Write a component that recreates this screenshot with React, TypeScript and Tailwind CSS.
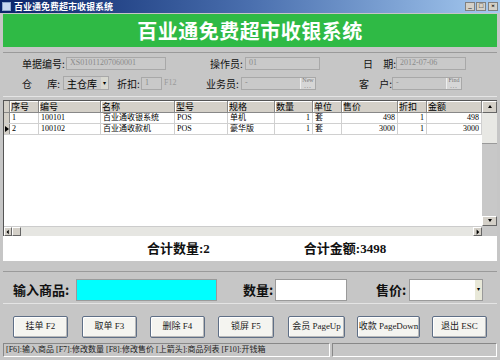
import React from 'react';

const FONT = '"Liberation Serif","Noto Sans CJK SC",serif';
const CJK = '"Noto Sans CJK SC","Liberation Sans",sans-serif';

type Row = { no: string; code: string; name: string; model: string; spec: string; qty: string; unit: string; price: string; disc: string; amount: string };

const rows: Row[] = [
  { no: '1', code: '100101', name: '百业通收银系统', model: 'POS', spec: '单机', qty: '1', unit: '套', price: '498', disc: '1', amount: '498' },
  { no: '2', code: '100102', name: '百业通收款机', model: 'POS', spec: '豪华版', qty: '1', unit: '套', price: '3000', disc: '1', amount: '3000' },
];

const cols = [
  { key: 'no', label: '序号', w: 29, right: false },
  { key: 'code', label: '编号', w: 62, right: false },
  { key: 'name', label: '名称', w: 74, right: false },
  { key: 'model', label: '型号', w: 53, right: false },
  { key: 'spec', label: '规格', w: 47, right: false },
  { key: 'qty', label: '数量', w: 38, right: true },
  { key: 'unit', label: '单位', w: 29, right: false },
  { key: 'price', label: '售价', w: 56, right: true },
  { key: 'disc', label: '折扣', w: 29, right: true },
  { key: 'amount', label: '金额', w: 55, right: true },
] as const;

function Field({ value, w, button }: { value: string; w: string; button?: string }) {
  return (
    <div className={`${w} h-[13px] border border-[#a8a8a8] bg-[#c9c9c9] flex items-center pl-[3px] text-[8px] text-[#8a8a8a] relative`}>
      <span className="leading-none">{value}</span>
      {button && (
        <span className="absolute right-0 top-0 h-full w-[15px] bg-[#d6d6d6] border-l border-[#eee] text-[6px] leading-[6px] text-[#777] flex flex-col items-center justify-center">
          <span>{button}</span>
          <span className="tracking-[1px]">...</span>
        </span>
      )}
    </div>
  );
}

function Label({ children, w }: { children: React.ReactNode; w: string }) {
  return <span className={`${w} text-[10px] text-[#111] flex justify-between`} style={{ fontFamily: CJK }}>{children}</span>;
}

function BtnArrow({ dir }: { dir: 'up' | 'down' | 'left' | 'right' }) {
  const pts = { up: '2,5 4,2 6,5', down: '2,2 4,5 6,2', left: '5,1 2,4 5,7', right: '3,1 6,4 3,7' }[dir];
  return (
    <svg width="8" height="8" viewBox="0 0 8 8"><polygon points={pts} fill="#000" /></svg>
  );
}

function FuncButton({ label, w, ml }: { label: string; w: string; ml: string }) {
  return (
    <button className={`${w} ${ml} h-[22px] bg-[#f4f4f0] border border-[#5f6f86] rounded-[2px] shadow-[inset_-1px_-1px_0_#b8b8b8,inset_1px_1px_0_#fff] text-[9px] text-[#222]`} style={{ fontFamily: FONT }}>
      {label}
    </button>
  );
}

export default function App() {
  return (
    <div className="w-[500px] h-[360px] bg-[#c6c6c6] flex flex-col overflow-hidden" style={{ fontFamily: FONT }}>
      {/* title bar */}
      <div className="h-[13px] bg-gradient-to-r from-[#0a246a] via-[#4a6fae] to-[#a6caf0] flex items-center px-[2px]">
        <div className="w-[9px] h-[9px] bg-[#c9d8f0] border border-[#8fa6cc] mr-[3px]" />
        <span className="text-[9px] font-bold text-white leading-none" style={{ fontFamily: CJK }}>百业通免费超市收银系统</span>
        <div className="ml-auto flex gap-[1px]">
          {['_', '□', '×'].map((s, i) => (
            <span key={i} className={`w-[10px] h-[9px] bg-[#d4d0c8] border border-[#808080] text-[7px] leading-[7px] text-black flex items-center justify-center font-bold ${i === 2 ? 'ml-[1px]' : ''}`}>{s}</span>
          ))}
        </div>
      </div>

      <div className="flex-1 flex flex-col px-[3px]">
        {/* banner */}
        <div className="mt-[1px] h-[33px] bg-[#2fba45] flex items-center justify-center">
          <span className="text-[20px] text-white font-semibold tracking-[0.5px]" style={{ fontFamily: CJK }}>百业通免费超市收银系统</span>
        </div>

        {/* header form */}
        <div className="mt-[5px] border-t border-[#9a9a9a] shadow-[0_1px_0_#e4e4e4] pt-[3px] pl-[19px] flex flex-col gap-[6px] h-[44px]">
          <div className="flex items-center h-[14px]">
            <Label w="w-[44px]"><span>单据编号:</span></Label>
            <Field value="XS01011207060001" w="w-[100px]" />
            <Label w="w-[35px] ml-[44px]"><span>操作员:</span></Label>
            <Field value="01" w="w-[75px]" />
            <Label w="w-[33px] ml-[43px]"><span>日</span><span>期:</span></Label>
            <Field value="2012-07-06" w="w-[70px]" />
          </div>
          <div className="flex items-center h-[14px]">
            <Label w="w-[41px] pr-[3px]"><span>仓</span><span>库:</span></Label>
            <div className="w-[46px] h-[14px] border border-[#a8a8a8] bg-[#c9c9c9] flex items-center">
              <span className="flex-1 pl-[3px] text-[10px] text-black" style={{ fontFamily: CJK }}>主仓库</span>
              <span className="w-[7px] h-full bg-[#d8d8d0] flex items-center justify-center text-[6px]">▾</span>
            </div>
            <Label w="w-[24px] ml-[8px]"><span>折扣:</span></Label>
            <Field value="1" w="w-[21px]" />
            <span className="ml-[2px] text-[8px] text-[#9a9a9a] w-[42px]">F12</span>
            <Label w="w-[35px]"><span>业务员:</span></Label>
            <Field value="-" w="w-[75px]" button="New" />
            <Label w="w-[33px] ml-[43px]"><span>客</span><span>户:</span></Label>
            <Field value="-" w="w-[70px]" button="Find" />
          </div>
        </div>

        {/* grid */}
        <div className="mt-[4px] h-[136px] bg-white border-l border-t border-[#555] flex flex-col">
          <div className="flex-1 flex">
            <div className="flex-1 flex flex-col">
              <div className="flex h-[12px] bg-[#d4d0c8] border-b border-[#888]">
                <div className="w-[6px] border-r border-[#888]" />
                {cols.map((c) => (
                  <div key={c.key} style={{ width: c.w }} className="border-r border-[#888] text-[9px] leading-[11px] pl-[1px] text-black shadow-[inset_1px_1px_0_#fff]">
                    <span style={{ fontFamily: CJK }}>{c.label}</span>
                  </div>
                ))}
              </div>
              {rows.map((r, i) => (
                <div key={r.no} className="flex h-[11px] border-b border-[#d0d0d0]">
                  <div className="w-[6px] border-r border-[#888] bg-[#d4d0c8] flex items-center justify-center">
                    {i === 1 && <svg width="4" height="6" viewBox="0 0 4 6"><polygon points="0,0 4,3 0,6" fill="#000" /></svg>}
                  </div>
                  {cols.map((c) => (
                    <div key={c.key} style={{ width: c.w }} className={`border-r border-[#d0d0d0] text-[8px] leading-[10px] px-[2px] text-black whitespace-nowrap overflow-hidden ${c.right ? 'text-right' : ''}`}>
                      {r[c.key]}
                    </div>
                  ))}
                </div>
              ))}
            </div>
            {/* vertical scrollbar */}
            <div className="w-[15px] flex flex-col bg-[#c8c8c8]">
              <div className="h-[12px] bg-[#d4d0c8] border border-[#fff] border-r-[#666] border-b-[#666] flex items-center justify-center"><BtnArrow dir="up" /></div>
              <div className="h-[31px] bg-[#e8e8e4] border-b border-[#999]" />
              <div className="flex-1" />
              <div className="h-[10px] bg-[#d4d0c8] border border-[#fff] border-r-[#666] border-b-[#666] flex items-center justify-center"><BtnArrow dir="down" /></div>
            </div>
          </div>
          {/* horizontal scrollbar */}
          <div className="h-[10px] flex">
            <div className="flex-1 flex bg-[#e6e6e2] border-t border-[#ccc]">
              <div className="w-[8px] bg-[#d4d0c8] border border-[#fff] border-r-[#666] border-b-[#666] flex items-center justify-center"><BtnArrow dir="left" /></div>
              <div className="w-[9px] bg-[#d4d0c8] border border-[#fff] border-r-[#666] border-b-[#666]" />
              <div className="flex-1" />
              <div className="w-[9px] bg-[#d4d0c8] border border-[#fff] border-r-[#666] border-b-[#666] flex items-center justify-center"><BtnArrow dir="right" /></div>
            </div>
            <div className="w-[15px] bg-[#c8c8c8]" />
          </div>
        </div>

        {/* totals */}
        <div className="h-[25px] bg-white flex items-center text-[13px] font-bold text-[#111]">
          <span className="ml-[144px]">合计数量:2</span>
          <span className="ml-[94px]">合计金额:3498</span>
        </div>

        {/* input row */}
        <div className="mt-[10px] border-t border-[#9a9a9a] shadow-[0_1px_0_#e4e4e4] pt-[4px] flex items-center h-[32px]">
          <span className="ml-[10px] w-[63px] text-[13px] font-bold text-[#111]" style={{ fontFamily: CJK }}>输入商品:</span>
          <div className="w-[141px] h-[22px] bg-[#00ffff] border border-[#9a9a9a]" />
          <span className="ml-[26px] w-[32px] text-[13px] font-bold text-[#111]" style={{ fontFamily: CJK }}>数量:</span>
          <div className="w-[72px] h-[22px] bg-white border border-[#9a9a9a]" />
          <span className="ml-[29px] w-[33px] text-[13px] font-bold text-[#111]" style={{ fontFamily: CJK }}>售价:</span>
          <div className="w-[74px] h-[22px] bg-white border border-[#9a9a9a] flex justify-end">
            <span className="w-[7px] h-full bg-[#e8e8d8] flex items-center justify-center text-[6px]">▾</span>
          </div>
        </div>

        {/* buttons */}
        <div className="mt-[13px] flex items-center">
          <FuncButton label="挂单 F2" w="w-[55px]" ml="ml-[10px]" />
          <FuncButton label="取单 F3" w="w-[55px]" ml="ml-[14px]" />
          <FuncButton label="删除 F4" w="w-[55px]" ml="ml-[13px]" />
          <FuncButton label="锁屏 F5" w="w-[56px]" ml="ml-[13px]" />
          <FuncButton label="会员 PageUp" w="w-[57px]" ml="ml-[14px]" />
          <FuncButton label="收款 PageDown" w="w-[63px]" ml="ml-[12px]" />
          <FuncButton label="退出 ESC" w="w-[55px]" ml="ml-[12px]" />
        </div>
      </div>

      {/* status bar */}
      <div className="h-[16px] mb-[2px] flex items-center px-[3px] text-[8px] text-[#222]">
        <div className="w-[327px] h-[14px] border border-[#888] border-r-[#fff] border-b-[#fff] flex items-center pl-[2px] whitespace-nowrap overflow-hidden">
          [F6]:输入商品 [F7]:修改数量 [F8]:修改售价 [上箭头]:商品列表 [F10]:开钱箱
        </div>
        <div className="flex-1 h-[14px] ml-[2px] border border-[#888] border-r-[#fff] border-b-[#fff]" />
      </div>
    </div>
  );
}
